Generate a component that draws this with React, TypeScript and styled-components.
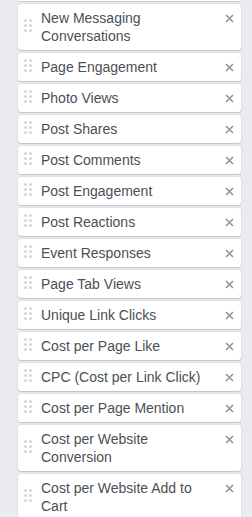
import React from "react";
import styled, { createGlobalStyle } from "styled-components";

const GlobalStyle = createGlobalStyle`
  html, body {
    margin: 0;
    padding: 0;
    background: #e9ebee;
    overflow: hidden;
  }
  body {
    font-family: "Liberation Sans", Arial, Helvetica, sans-serif;
  }
`;

const metrics = [
  "New Messaging Conversations",
  "Page Engagement",
  "Photo Views",
  "Post Shares",
  "Post Comments",
  "Post Engagement",
  "Post Reactions",
  "Event Responses",
  "Page Tab Views",
  "Unique Link Clicks",
  "Cost per Page Like",
  "CPC (Cost per Link Click)",
  "Cost per Page Mention",
  "Cost per Website Conversion",
  "Cost per Website Add to Cart",
];

const App = () => {
  return (
    <>
      <GlobalStyle />
      <Panel>
        <List>
          {/* bottom edge of the card scrolled above */}
          <CardTail />
          {metrics.map((name) => (
            <Card key={name}>
              <Grip>
                {new Array(6).fill(0).map((_, i) => (
                  <Dot key={i} />
                ))}
              </Grip>
              <Label>{name}</Label>
              <Remove aria-label="Remove">
                <svg width="9" height="9" viewBox="0 0 9 9">
                  <path
                    d="M1 1 L8 8 M8 1 L1 8"
                    stroke="#90949c"
                    strokeWidth="1.6"
                  />
                </svg>
              </Remove>
            </Card>
          ))}
        </List>
      </Panel>
    </>
  );
};

export default App;

const Panel = styled.div`
  width: 252px;
  height: 517px;
  overflow: hidden;
  padding: 0 11px 0 18px;
  box-sizing: border-box;
`;

const List = styled.div`
  display: flex;
  flex-direction: column;
  gap: 3px;
`;

const CardTail = styled.div`
  height: 1px;
  background: #fff;
  border-radius: 0 0 3px 3px;
  box-shadow: 0 1px 1px rgba(0, 0, 0, 0.14);
`;

const Card = styled.div`
  display: flex;
  align-items: flex-start;
  background: #fff;
  border-radius: 3px;
  box-shadow: 0 1px 1px rgba(0, 0, 0, 0.14), 0 0 0 1px rgba(0, 0, 0, 0.03);
  padding: 5px 7px 5px 6px;
  min-height: 18px;
`;

const Grip = styled.div`
  display: grid;
  grid-template-columns: repeat(2, 3px);
  gap: 2px;
  align-self: center;
  margin-top: -4px;
  margin-right: 9px;
  flex-shrink: 0;
`;

const Dot = styled.span`
  width: 3px;
  height: 3px;
  border-radius: 50%;
  background: #d3d6db;
`;

const Label = styled.div`
  flex: 1;
  font-size: 14px;
  line-height: 18px;
  color: #4b4f56;
  padding-right: 8px;
`;

const Remove = styled.button`
  border: none;
  background: none;
  padding: 0;
  margin-top: 5px;
  display: flex;
  cursor: pointer;
`;
